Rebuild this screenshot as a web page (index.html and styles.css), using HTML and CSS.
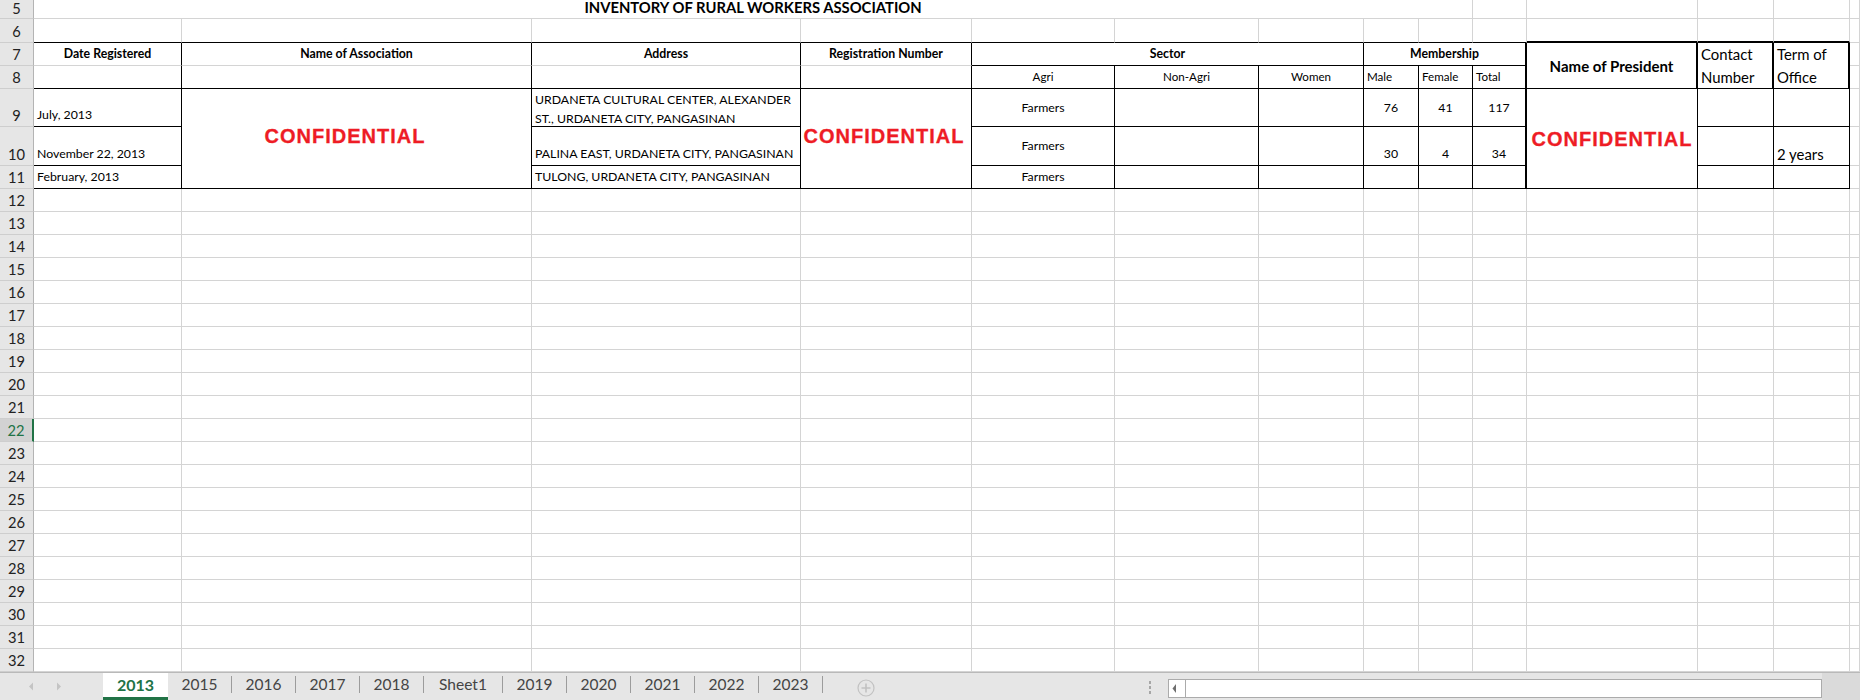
FILE: index.html
```html
<!DOCTYPE html>
<html>
<head>
<meta charset="utf-8">
<title>INVENTORY OF RURAL WORKERS ASSOCIATION</title>
<link rel="stylesheet" href="styles.css">
</head>
<body>
<div class="sheet">
<!-- row 5 -->
<div class="rh top">5</div><div class="c title">INVENTORY OF RURAL WORKERS ASSOCIATION</div><div class="c"></div><div class="c"></div><div class="c"></div><div class="c"></div><div class="c"></div>
<!-- row 6 -->
<div class="rh">6</div><div class="c bb"></div><div class="c bb"></div><div class="c bb"></div><div class="c bb"></div><div class="c bb"></div><div class="c bb"></div><div class="c bb"></div><div class="c bb"></div><div class="c bb"></div><div class="c bb"></div><div class="c bb2"></div><div class="c bb2"></div><div class="c bb2"></div><div class="c"></div>
<!-- row 7 -->
<div class="rh">7</div>
<div class="c hd ctr mid br">Date Registered</div>
<div class="c hd ctr mid br">Name of Association</div>
<div class="c hd ctr mid br">Address</div>
<div class="c hd ctr mid br">Registration Number</div>
<div class="c hd ctr mid s3 br bb">Sector</div>
<div class="c hd ctr mid s3 br2 bb">Membership</div>
<div class="c hd pres ctr mid r2 br2 bb">Name of President</div>
<div class="c big mid r2 br2 bb"><span class="lines">Contact<br>Number</span></div>
<div class="c big mid r2 br2 bb"><span class="lines">Term of<br>Office</span></div>
<div class="c"></div>
<!-- row 8 -->
<div class="rh">8</div>
<div class="c br bb"></div><div class="c br bb"></div><div class="c br bb"></div><div class="c br bb"></div>
<div class="c sub ctr mid br bb">Agri</div>
<div class="c sub ctr mid br bb">Non-Agri</div>
<div class="c sub ctr mid br bb">Women</div>
<div class="c sub mid br bb">Male</div>
<div class="c sub mid br bb">Female</div>
<div class="c sub mid br2 bb">Total</div>
<div class="c"></div>
<!-- row 9 -->
<div class="rh">9</div>
<div class="c br bb">July, 2013</div>
<div class="c conf conf-b r3 br bb">CONFIDENTIAL</div>
<div class="c mid br bb"><span class="lines addr">URDANETA CULTURAL CENTER, ALEXANDER<br>ST., URDANETA CITY, PANGASINAN</span></div>
<div class="c conf conf-d r3 br bb">CONFIDENTIAL</div>
<div class="c ctr mid br bb">Farmers</div>
<div class="c br bb"></div><div class="c br bb"></div>
<div class="c ctr mid br bb">76</div>
<div class="c ctr mid br bb">41</div>
<div class="c ctr mid br2 bb">117</div>
<div class="c conf r3 br bb">CONFIDENTIAL</div>
<div class="c br bb"></div><div class="c br bb"></div>
<div class="c"></div>
<!-- row 10 -->
<div class="rh">10</div>
<div class="c br bb">November 22, 2013</div>
<div class="c br bb">PALINA EAST, URDANETA CITY, PANGASINAN</div>
<div class="c ctr mid br bb">Farmers</div>
<div class="c br bb"></div><div class="c br bb"></div>
<div class="c ctr br bb">30</div>
<div class="c ctr br bb">4</div>
<div class="c ctr br2 bb">34</div>
<div class="c br bb"></div>
<div class="c big br bb">2 years</div>
<div class="c"></div>
<!-- row 11 -->
<div class="rh">11</div>
<div class="c br bb">February, 2013</div>
<div class="c br bb">TULONG, URDANETA CITY, PANGASINAN</div>
<div class="c ctr br bb">Farmers</div>
<div class="c br bb"></div><div class="c br bb"></div><div class="c br bb"></div><div class="c br bb"></div><div class="c br2 bb"></div>
<div class="c br bb"></div><div class="c br bb"></div>
<div class="c"></div>
<!-- rows 12-32 -->
<div class="rh">12</div><div class="c"></div><div class="c"></div><div class="c"></div><div class="c"></div><div class="c"></div><div class="c"></div><div class="c"></div><div class="c"></div><div class="c"></div><div class="c"></div><div class="c"></div><div class="c"></div><div class="c"></div><div class="c"></div>
<div class="rh">13</div><div class="c"></div><div class="c"></div><div class="c"></div><div class="c"></div><div class="c"></div><div class="c"></div><div class="c"></div><div class="c"></div><div class="c"></div><div class="c"></div><div class="c"></div><div class="c"></div><div class="c"></div><div class="c"></div>
<div class="rh">14</div><div class="c"></div><div class="c"></div><div class="c"></div><div class="c"></div><div class="c"></div><div class="c"></div><div class="c"></div><div class="c"></div><div class="c"></div><div class="c"></div><div class="c"></div><div class="c"></div><div class="c"></div><div class="c"></div>
<div class="rh">15</div><div class="c"></div><div class="c"></div><div class="c"></div><div class="c"></div><div class="c"></div><div class="c"></div><div class="c"></div><div class="c"></div><div class="c"></div><div class="c"></div><div class="c"></div><div class="c"></div><div class="c"></div><div class="c"></div>
<div class="rh">16</div><div class="c"></div><div class="c"></div><div class="c"></div><div class="c"></div><div class="c"></div><div class="c"></div><div class="c"></div><div class="c"></div><div class="c"></div><div class="c"></div><div class="c"></div><div class="c"></div><div class="c"></div><div class="c"></div>
<div class="rh">17</div><div class="c"></div><div class="c"></div><div class="c"></div><div class="c"></div><div class="c"></div><div class="c"></div><div class="c"></div><div class="c"></div><div class="c"></div><div class="c"></div><div class="c"></div><div class="c"></div><div class="c"></div><div class="c"></div>
<div class="rh">18</div><div class="c"></div><div class="c"></div><div class="c"></div><div class="c"></div><div class="c"></div><div class="c"></div><div class="c"></div><div class="c"></div><div class="c"></div><div class="c"></div><div class="c"></div><div class="c"></div><div class="c"></div><div class="c"></div>
<div class="rh">19</div><div class="c"></div><div class="c"></div><div class="c"></div><div class="c"></div><div class="c"></div><div class="c"></div><div class="c"></div><div class="c"></div><div class="c"></div><div class="c"></div><div class="c"></div><div class="c"></div><div class="c"></div><div class="c"></div>
<div class="rh">20</div><div class="c"></div><div class="c"></div><div class="c"></div><div class="c"></div><div class="c"></div><div class="c"></div><div class="c"></div><div class="c"></div><div class="c"></div><div class="c"></div><div class="c"></div><div class="c"></div><div class="c"></div><div class="c"></div>
<div class="rh">21</div><div class="c"></div><div class="c"></div><div class="c"></div><div class="c"></div><div class="c"></div><div class="c"></div><div class="c"></div><div class="c"></div><div class="c"></div><div class="c"></div><div class="c"></div><div class="c"></div><div class="c"></div><div class="c"></div>
<div class="rh sel">22</div><div class="c"></div><div class="c"></div><div class="c"></div><div class="c"></div><div class="c"></div><div class="c"></div><div class="c"></div><div class="c"></div><div class="c"></div><div class="c"></div><div class="c"></div><div class="c"></div><div class="c"></div><div class="c"></div>
<div class="rh">23</div><div class="c"></div><div class="c"></div><div class="c"></div><div class="c"></div><div class="c"></div><div class="c"></div><div class="c"></div><div class="c"></div><div class="c"></div><div class="c"></div><div class="c"></div><div class="c"></div><div class="c"></div><div class="c"></div>
<div class="rh">24</div><div class="c"></div><div class="c"></div><div class="c"></div><div class="c"></div><div class="c"></div><div class="c"></div><div class="c"></div><div class="c"></div><div class="c"></div><div class="c"></div><div class="c"></div><div class="c"></div><div class="c"></div><div class="c"></div>
<div class="rh">25</div><div class="c"></div><div class="c"></div><div class="c"></div><div class="c"></div><div class="c"></div><div class="c"></div><div class="c"></div><div class="c"></div><div class="c"></div><div class="c"></div><div class="c"></div><div class="c"></div><div class="c"></div><div class="c"></div>
<div class="rh">26</div><div class="c"></div><div class="c"></div><div class="c"></div><div class="c"></div><div class="c"></div><div class="c"></div><div class="c"></div><div class="c"></div><div class="c"></div><div class="c"></div><div class="c"></div><div class="c"></div><div class="c"></div><div class="c"></div>
<div class="rh">27</div><div class="c"></div><div class="c"></div><div class="c"></div><div class="c"></div><div class="c"></div><div class="c"></div><div class="c"></div><div class="c"></div><div class="c"></div><div class="c"></div><div class="c"></div><div class="c"></div><div class="c"></div><div class="c"></div>
<div class="rh">28</div><div class="c"></div><div class="c"></div><div class="c"></div><div class="c"></div><div class="c"></div><div class="c"></div><div class="c"></div><div class="c"></div><div class="c"></div><div class="c"></div><div class="c"></div><div class="c"></div><div class="c"></div><div class="c"></div>
<div class="rh">29</div><div class="c"></div><div class="c"></div><div class="c"></div><div class="c"></div><div class="c"></div><div class="c"></div><div class="c"></div><div class="c"></div><div class="c"></div><div class="c"></div><div class="c"></div><div class="c"></div><div class="c"></div><div class="c"></div>
<div class="rh">30</div><div class="c"></div><div class="c"></div><div class="c"></div><div class="c"></div><div class="c"></div><div class="c"></div><div class="c"></div><div class="c"></div><div class="c"></div><div class="c"></div><div class="c"></div><div class="c"></div><div class="c"></div><div class="c"></div>
<div class="rh">31</div><div class="c"></div><div class="c"></div><div class="c"></div><div class="c"></div><div class="c"></div><div class="c"></div><div class="c"></div><div class="c"></div><div class="c"></div><div class="c"></div><div class="c"></div><div class="c"></div><div class="c"></div><div class="c"></div>
<div class="rh">32</div><div class="c"></div><div class="c"></div><div class="c"></div><div class="c"></div><div class="c"></div><div class="c"></div><div class="c"></div><div class="c"></div><div class="c"></div><div class="c"></div><div class="c"></div><div class="c"></div><div class="c"></div><div class="c"></div>
</div>

<div class="tabbar">
  <svg class="nav" width="103" height="27" viewBox="0 0 103 27">
    <path d="M33 9.5 L29 13.5 L33 17.5 Z" fill="#c4c4c4"/>
    <path d="M57 9.5 L61 13.5 L57 17.5 Z" fill="#c4c4c4"/>
  </svg>
  <div class="tab active">2013</div>
  <div class="tab">2015</div>
  <div class="tab">2016</div>
  <div class="tab">2017</div>
  <div class="tab">2018</div>
  <div class="tab wide">Sheet1</div>
  <div class="tab">2019</div>
  <div class="tab">2020</div>
  <div class="tab">2021</div>
  <div class="tab">2022</div>
  <div class="tab">2023</div>
  <svg class="add" width="18" height="18" viewBox="0 0 18 18">
    <circle cx="9" cy="9" r="8" fill="none" stroke="#c2c2c2" stroke-width="1.2"/>
    <path d="M9 4.5v9M4.5 9h9" stroke="#c2c2c2" stroke-width="1.6"/>
  </svg>
  <div class="spacer"></div>
  <svg class="dots" width="6" height="27" viewBox="0 0 6 27">
    <rect x="2" y="8" width="2" height="3" fill="#a6a6a6"/>
    <rect x="2" y="13" width="2" height="3" fill="#a6a6a6"/>
    <rect x="2" y="18" width="2" height="3" fill="#a6a6a6"/>
  </svg>
  <div class="scroll">
    <svg class="sbtn" width="18" height="19" viewBox="0 0 18 19">
      <rect x="0.5" y="0.5" width="17" height="18" fill="#fff" stroke="#ababab"/>
      <path d="M8 5 L4.5 9.5 L8 14 Z" fill="#6e6e6e"/>
    </svg>
    <div class="track"></div>
  </div>
  <div class="rend"></div>
</div>
</body>
</html>
```

FILE: styles.css
```css
* { box-sizing: border-box; }
html, body { margin: 0; padding: 0; }
body {
  width: 1860px;
  height: 700px;
  overflow: hidden;
  background: #fff;
  font-family: Lato, "Liberation Sans", sans-serif;
  color: #000;
}

.sheet {
  display: grid;
  grid-template-columns: 34px 148px 350px 269px 171px 143px 144px 105px 55px 54px 54px 171px 76px 76px 10px;
  grid-template-rows: 19px 24px 23px 23px 38px 39px 23px repeat(21, 23px);
  height: 672px;
  overflow: hidden;
}

.rh {
  background: #e6e6e6;
  border-right: 1px solid #b4b4b4;
  border-bottom: 1px solid #cecece;
  display: flex;
  justify-content: center;
  align-items: flex-end;
  font-size: 14.7px;
  line-height: 22px;
  color: #222;
}
.rh.top {
  line-height: 16px;
  padding-bottom: 2px;
}
.rh.sel {
  background: #d2d2d2;
  color: #217346;
  border-right: 2px solid #217346;
}

.c {
  border-right: 1px solid #d4d4d4;
  border-bottom: 1px solid #d4d4d4;
  display: flex;
  align-items: flex-end;
  padding: 0 3px;
  font-size: 12.3px;
  line-height: 22px;
  white-space: nowrap;
  overflow: hidden;
  min-width: 0;
}

.br { border-right-color: #000; }
.bb { border-bottom-color: #000; }
.br2 { border-right: 2px solid #000; }
.bb2 { border-bottom: 2px solid #000; }

.ctr { justify-content: center; }
.mid { align-items: center; }
.s3 { grid-column: span 3; }
.r2 { grid-row: span 2; }
.r3 { grid-row: span 3; }

.hd { font-weight: 700; }
.pres { font-size: 15px; }
.sub { font-size: 11.6px; }
.big { font-size: 14.9px; }

.lines { display: block; line-height: 23px; }
.lines.addr { line-height: 19px; padding-top: 2px; }

.title {
  grid-column: span 9;
  justify-content: center;
  align-items: center;
  padding-bottom: 3px;
  font-weight: 700;
  font-size: 14.8px;
  line-height: 15px;
  overflow: visible;
}

.conf {
  justify-content: center;
  align-items: center;
  color: #ee1c25;
  font-family: "Liberation Sans", Arial, sans-serif;
  font-weight: 700;
  font-size: 20px;
  letter-spacing: 1px;
  line-height: 24px;
  -webkit-text-stroke: 0.3px #ee1c25;
}
.conf-b { padding: 0 26px 5px 3px; }
.conf-d { padding: 0 7px 5px 3px; }

.tabbar {
  height: 28px;
  background: #e6e6e6;
  border-top: 1px solid #b9b9b9;
  display: flex;
  align-items: center;
}
.nav { flex: none; }
.tab {
  flex: none;
  width: 64px;
  height: 17px;
  margin-bottom: 4px;
  border-right: 1px solid #9c9c9c;
  text-align: center;
  font-size: 15.5px;
  line-height: 16px;
  color: #444;
}
.tab.wide { width: 79px; }
.tab.active {
  width: 65px;
  height: auto;
  margin-bottom: 0;
  align-self: stretch;
  display: flex;
  align-items: center;
  justify-content: center;
  background: #fff;
  border-right: none;
  border-bottom: 3px solid #217346;
  color: #217346;
  font-weight: 700;
  font-size: 16px;
}
.add { flex: none; margin-left: 34px; margin-top: 3px; }
.spacer { flex: 1; }
.dots { flex: none; margin-right: 15px; }
.scroll {
  flex: none;
  display: flex;
  height: 19px;
  margin-top: 3px;
}
.sbtn { flex: none; }
.track {
  width: 636px;
  height: 19px;
  background: #fff;
  border: 1px solid #ababab;
  border-left: none;
}
.rend {
  flex: none;
  width: 38px;
  align-self: stretch;
  background: #dadada;
}
```
